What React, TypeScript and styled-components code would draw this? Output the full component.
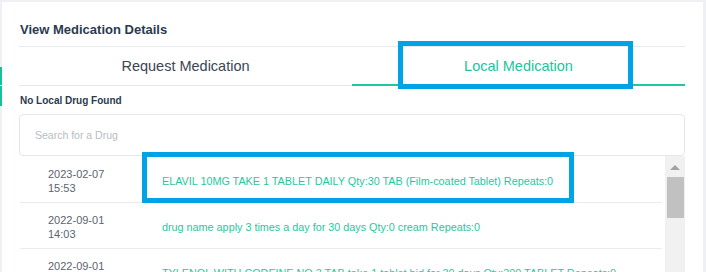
import styled, { createGlobalStyle } from "styled-components";

const GlobalStyle = createGlobalStyle`
  html, body {
    margin: 0;
    padding: 0;
    overflow: hidden;
  }
  body {
    font-family: "Liberation Sans", Arial, sans-serif;
    background: #eef0f3;
  }
`;

const medications = [
  {
    date: "2023-02-07",
    time: "15:53",
    text: "ELAVIL 10MG TAKE 1 TABLET DAILY Qty:30 TAB (Film-coated Tablet) Repeats:0",
  },
  {
    date: "2022-09-01",
    time: "14:03",
    text: "drug name apply 3 times a day for 30 days Qty:0 cream Repeats:0",
  },
  {
    date: "2022-09-01",
    time: "13:58",
    text: "TYLENOL WITH CODEINE NO.3 TAB take 1 tablet bid for 30 days Qty:300 TABLET Repeats:0",
  },
  { date: "2022-08-24", time: "10:12", text: "AMOXICILLIN 500MG take 1 capsule tid Qty:21 CAP Repeats:0" },
];

const Page = styled.div`
  display: flex;
  height: 100vh;
  padding-top: 2px;
  box-sizing: border-box;
  overflow: hidden;
`;

const SideStrip = styled.div`
  width: 2px;
  flex-shrink: 0;
  padding-top: 65px;
`;

const SideMark = styled.div<{ $h: number }>`
  height: ${(p) => p.$h}px;
  margin-bottom: 1px;
  background: #16c09a;
`;

const Panel = styled.div`
  position: relative;
  width: 701px;
  flex-shrink: 0;
  box-sizing: border-box;
  padding: 20px 18px 0 17px;
  background: #ffffff;
`;

const Title = styled.h2`
  margin: 0 0 8px 1px;
  font-size: 13px;
  line-height: 16px;
  font-weight: 700;
  color: #2b3a4f;
`;

const TabRow = styled.div`
  display: flex;
  border-top: 1px solid #e7eaee;
  border-bottom: 1px solid #e5e8ec;
`;

const Tab = styled.div<{ $active?: boolean }>`
  flex: 1;
  display: flex;
  align-items: center;
  justify-content: center;
  box-sizing: border-box;
  height: ${(p) => (p.$active ? "39px" : "38px")};
  margin-bottom: ${(p) => (p.$active ? "-1px" : "0")};
  border-bottom: ${(p) => (p.$active ? "2px solid #1fc8a0" : "none")};
  font-size: 14.5px;
  color: ${(p) => (p.$active ? "#22c4a0" : "#3c4553")};
`;

const SubTitle = styled.div`
  margin: 9px 0 7px 1px;
  font-size: 10px;
  line-height: 12px;
  font-weight: 700;
  color: #2b3a4f;
`;

const SearchInput = styled.input`
  display: block;
  width: 100%;
  height: 42px;
  box-sizing: border-box;
  padding: 0 15px;
  border: 1px solid #e4e7ee;
  border-radius: 4px;
  outline: none;
  font-family: inherit;
  font-size: 10.5px;
  color: #333;

  &::placeholder {
    color: #b8bcc4;
  }
`;

const TableArea = styled.div`
  display: flex;
  height: 180px;
  overflow: hidden;
`;

const RowList = styled.div`
  flex: 1;
  min-width: 0;
  padding-top: 1px;
`;

const Row = styled.div`
  display: grid;
  grid-template-columns: 142px 1fr;
  align-items: center;
  height: 46px;
  box-sizing: border-box;
  padding-top: 3px;
  margin: 0 3px 0 1px;
  border-bottom: 1px solid #e9ecef;
`;

const DateCell = styled.div`
  padding-left: 28px;
  font-size: 11px;
  line-height: 14px;
  color: #5b6370;
`;

const DrugCell = styled.div`
  font-size: 10.8px;
  color: #1fc8a0;
  white-space: nowrap;
`;

const ScrollTrack = styled.div`
  width: 20px;
  flex-shrink: 0;
  background: #f1f1f1;
  display: flex;
  flex-direction: column;
`;

const ScrollArrow = styled.div`
  height: 20px;
  box-sizing: border-box;
  padding-top: 9px;
  display: flex;
  justify-content: center;

  &::before {
    content: "";
    width: 0;
    height: 0;
    border-left: 5px solid transparent;
    border-right: 5px solid transparent;
    border-bottom: 5px solid #a3a3a3;
  }
`;

const ScrollThumb = styled.div`
  height: 41px;
  margin: 1px 1px 0 2px;
  background: #c1c1c1;
`;

const Highlight = styled.div<{ $left: number; $top: number; $w: number; $h: number }>`
  position: absolute;
  left: ${(p) => p.$left}px;
  top: ${(p) => p.$top}px;
  width: ${(p) => p.$w}px;
  height: ${(p) => p.$h}px;
  box-sizing: border-box;
  border: 5px solid #00a3e6;
  pointer-events: none;
`;

const App = () => {
  return (
    <>
      <GlobalStyle />
      <Page>
        <SideStrip>
          <SideMark $h={18} />
          <SideMark $h={20} />
        </SideStrip>
        <Panel>
          <Title>View Medication Details</Title>
          <TabRow>
            <Tab>Request Medication</Tab>
            <Tab $active>Local Medication</Tab>
          </TabRow>
          <SubTitle>No Local Drug Found</SubTitle>
          <SearchInput placeholder="Search for a Drug" />
          <TableArea>
            <RowList>
              {medications.map((m, i) => (
                <Row key={i}>
                  <DateCell>
                    {m.date}
                    <br />
                    {m.time}
                  </DateCell>
                  <DrugCell>{m.text}</DrugCell>
                </Row>
              ))}
            </RowList>
            <ScrollTrack>
              <ScrollArrow />
              <ScrollThumb />
            </ScrollTrack>
          </TableArea>
          <Highlight $left={396} $top={39} $w={235} $h={48} />
          <Highlight $left={140} $top={150} $w={432} $h={51} />
        </Panel>
      </Page>
    </>
  );
};

export default App;
